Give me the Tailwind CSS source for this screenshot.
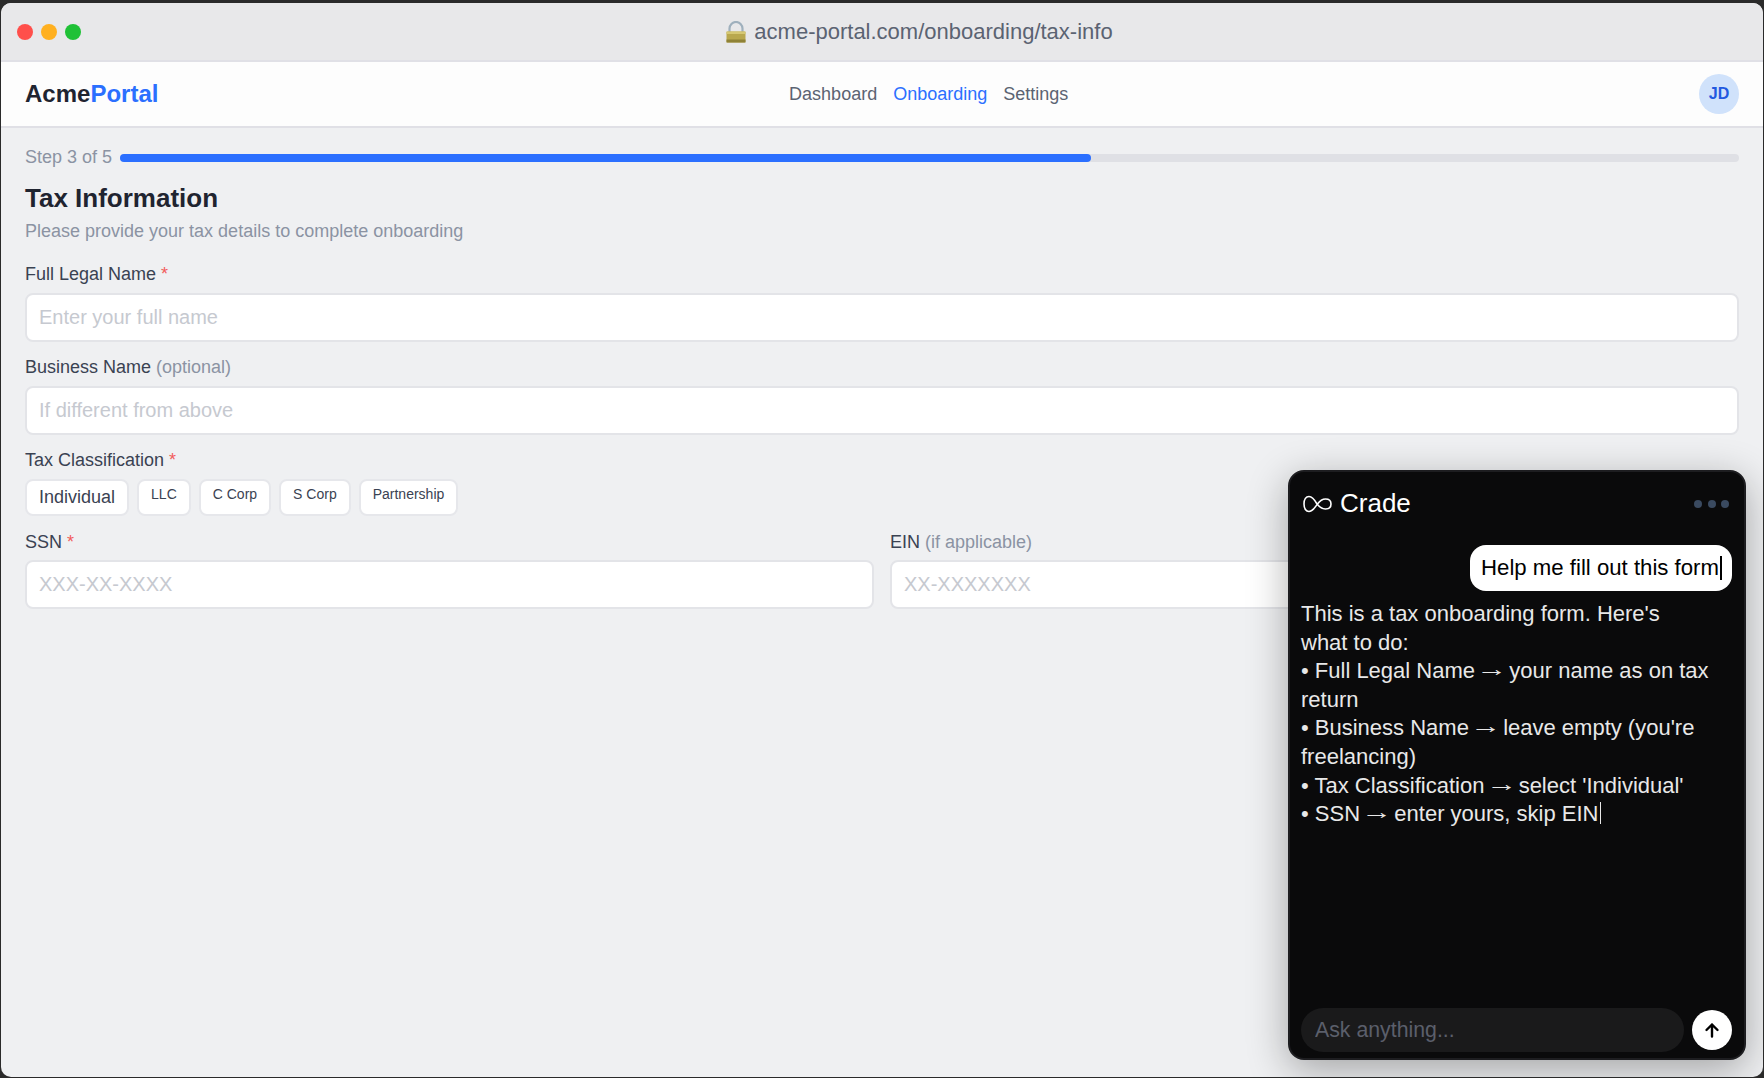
<!doctype html>
<html>
<head>
<meta charset="utf-8">
<script src="https://cdn.jsdelivr.net/npm/@tailwindcss/browser@4"></script>
</head>
<body class="m-0 bg-black font-['Liberation_Sans',Arial,sans-serif]">
<div class="h-[1078px] w-[1764px] overflow-hidden bg-[#2a2a2a] pt-[3px] pb-px pl-px pr-px">
  <div class="relative flex h-[1074px] flex-col overflow-hidden rounded-[10px] bg-[#eff0f2]">
    <header class="flex h-[59px] shrink-0 items-center border-b-2 border-[#e0e0e6] bg-[#e8e8ea] pl-4">
      <div class="flex gap-2">
        <span class="size-4 rounded-full bg-[#ff4f4b]"></span>
        <span class="size-4 rounded-full bg-[#ffb020]"></span>
        <span class="size-4 rounded-full bg-[#1fc136]"></span>
      </div>
      <div class="flex flex-1 items-center justify-center gap-[8px] pr-[5px] text-[22px] text-[#5b6372]">
        <svg class="h-[22px] w-[20px]" viewBox="0 0 20 22">
          <path d="M3.500 11V7.500a6.500 6.500 0 0 1 13 0V11" fill="none" stroke="#9fb0bd" stroke-width="2.200"/>
          <rect x="0.500" y="10.500" width="19" height="11" rx="1" fill="#b9a84e"/>
          <rect x="0.500" y="10.500" width="19" height="2.500" fill="#d6c873"/>
          <rect x="0.500" y="18.500" width="19" height="3" fill="#8f8236"/>
        </svg>
        <span>acme-portal.com/onboarding/tax-info</span>
      </div>
    </header>
    <nav class="flex h-[66px] shrink-0 items-center justify-between border-b-2 border-[#e0e0e6] bg-[#fdfdfd] pr-6 pl-6">
      <div class="text-2xl font-bold text-[#1f2430]">Acme<span class="text-[#2b6fff]">Portal</span></div>
      <div class="flex gap-4 text-lg text-[#5b6372]">
        <span>Dashboard</span>
        <span class="text-[#2b6fff]">Onboarding</span>
        <span>Settings</span>
      </div>
      <div class="flex size-10 items-center justify-center rounded-full bg-[#d0e2fb] text-base font-bold text-[#2259e0]">JD</div>
    </nav>
    <main class="flex flex-col px-6 pt-[17px]">
      <div class="flex items-center gap-2 text-lg leading-6 text-[#8b93a3]">
        <span>Step 3 of 5</span>
        <div class="mt-[2px] h-2 flex-1 rounded-full bg-[#dfe0e5]">
          <div class="h-2 w-3/5 rounded-full bg-[#2b6fff]"></div>
        </div>
      </div>
      <h1 class="mt-[13px] text-[26px] leading-8 font-bold text-[#1f2430]">Tax Information</h1>
      <p class="mt-[5px] text-lg leading-6 text-[#8b93a3]">Please provide your tax details to complete onboarding</p>

      <label class="mt-[19px] text-lg leading-6 text-[#3a4252]">Full Legal Name <span class="text-[#f25c5c]">*</span></label>
      <input class="mt-[7px] h-[49px] w-full rounded-lg border-2 border-[#e3e4e8] bg-white px-3 text-xl text-[#1a2030] placeholder:text-[#c6c9d0]" placeholder="Enter your full name">

      <label class="mt-[13px] text-lg leading-6 text-[#3a4252]">Business Name <span class="text-[#8b93a3]">(optional)</span></label>
      <input class="mt-[7px] h-[49px] w-full rounded-lg border-2 border-[#e3e4e8] bg-white px-3 text-xl text-[#1a2030] placeholder:text-[#c6c9d0]" placeholder="If different from above">

      <label class="mt-[13px] text-lg leading-6 text-[#3a4252]">Tax Classification <span class="text-[#f25c5c]">*</span></label>
      <div class="mt-[7px] flex gap-2 text-sm text-[#3a4252]">
        <span class="rounded-lg border-2 border-[#e6e7eb] bg-white px-3 py-[4px] text-lg leading-[25px]">Individual</span>
        <span class="rounded-lg border-2 border-[#e6e7eb] bg-white px-3 pt-[3px] pb-[10px] leading-5">LLC</span>
        <span class="rounded-lg border-2 border-[#e6e7eb] bg-white px-3 pt-[3px] pb-[10px] leading-5">C Corp</span>
        <span class="rounded-lg border-2 border-[#e6e7eb] bg-white px-3 pt-[3px] pb-[10px] leading-5">S Corp</span>
        <span class="rounded-lg border-2 border-[#e6e7eb] bg-white px-3 pt-[3px] pb-[10px] leading-5">Partnership</span>
      </div>

      <div class="mt-[14px] grid grid-cols-2 gap-4">
        <div>
          <label class="block text-lg leading-6 text-[#3a4252]">SSN <span class="text-[#f25c5c]">*</span></label>
          <input class="mt-[6px] h-[49px] w-full rounded-lg border-2 border-[#e3e4e8] bg-white px-3 text-xl text-[#1a2030] placeholder:text-[#c6c9d0]" placeholder="XXX-XX-XXXX">
        </div>
        <div>
          <label class="block text-lg leading-6 text-[#3a4252]">EIN <span class="text-[#8b93a3]">(if applicable)</span></label>
          <input class="mt-[6px] h-[49px] w-full rounded-lg border-2 border-[#e3e4e8] bg-white px-3 text-xl text-[#1a2030] placeholder:text-[#c6c9d0]" placeholder="XX-XXXXXXX">
        </div>
      </div>
    </main>

    <aside class="absolute right-[17px] bottom-[17px] flex h-[590px] w-[458px] flex-col rounded-2xl border-2 border-[#1d1d20] bg-[#0a0a0b] pr-3 pb-[6px] pl-[11px] shadow-[0_10px_40px_rgba(0,0,0,0.32)]">
      <div class="flex h-[63px] shrink-0 items-center justify-between">
        <div class="flex items-center gap-[8px] pl-[2px] text-[26px] text-white">
          <svg class="h-[18px] w-[29px]" viewBox="0 0 29 18" fill="none" stroke="white" stroke-width="1.600">
            <path d="M14 9C11.500 4.500 9 1.500 6 1.500C3 1.500 1 4.500 1 9C1 13.500 3 16.500 6 16.500C9.500 16.500 12 12.500 14.500 9C17 5.500 19.500 4 22.500 4C25.800 4 28 6 28 9C28 12 25.800 14 22.500 14C19.500 14 16.500 12 14 9Z"/>
          </svg>
          <span>Crade</span>
        </div>
        <div class="flex gap-[5.500px] pr-[3px]">
          <span class="size-2 rounded-full bg-[#3a4a60]"></span>
          <span class="size-2 rounded-full bg-[#3a4a60]"></span>
          <span class="size-2 rounded-full bg-[#3a4a60]"></span>
        </div>
      </div>
      <div class="mt-[10px] flex justify-end">
        <div class="flex h-[46px] items-center rounded-2xl bg-white pr-[10px] pl-[11px] text-[22.200px] text-black">Help me fill out this form<span class="ml-px inline-block h-[24px] w-[2px] bg-black"></span></div>
      </div>
      <div class="mt-[9px] flex-1 text-[22px] leading-[28.600px] whitespace-nowrap text-[#e8e8e8]">
        <p>This is a tax onboarding form. Here's</p>
        <p>what to do:</p>
        <p>• Full Legal Name<span class="whitespace-pre"> <span class="inline-block -translate-y-[2px] scale-x-[1.4]">→</span> </span>your name as on tax</p>
        <p>return</p>
        <p>• Business Name<span class="whitespace-pre"> <span class="inline-block -translate-y-[2px] scale-x-[1.4]">→</span> </span>leave empty (you're</p>
        <p>freelancing)</p>
        <p>• Tax Classification<span class="whitespace-pre"> <span class="inline-block -translate-y-[2px] scale-x-[1.4]">→</span> </span>select 'Individual'</p>
        <p>• SSN<span class="whitespace-pre"> <span class="inline-block -translate-y-[2px] scale-x-[1.4]">→</span> </span>enter yours, skip EIN<span class="ml-px inline-block h-[22px] w-px bg-[#e8e8e8] align-[-3px]"></span></p>
      </div>
      <div class="flex items-center gap-2">
        <input class="h-11 min-w-0 flex-1 rounded-[22px] bg-[#1a1a1b] px-[14px] text-[21.300px] text-white placeholder:text-[#5b5f6b]" placeholder="Ask anything...">
        <button class="flex size-10 items-center justify-center rounded-full bg-white">
          <svg class="size-4" viewBox="0 0 16 16" fill="none" stroke="black" stroke-width="2.400" stroke-linecap="round" stroke-linejoin="round"><path d="M8 14.500V2.500M2.500 8 8 2.500 13.500 8"/></svg>
        </button>
      </div>
    </aside>
  </div>
</div>
</body>
</html>
